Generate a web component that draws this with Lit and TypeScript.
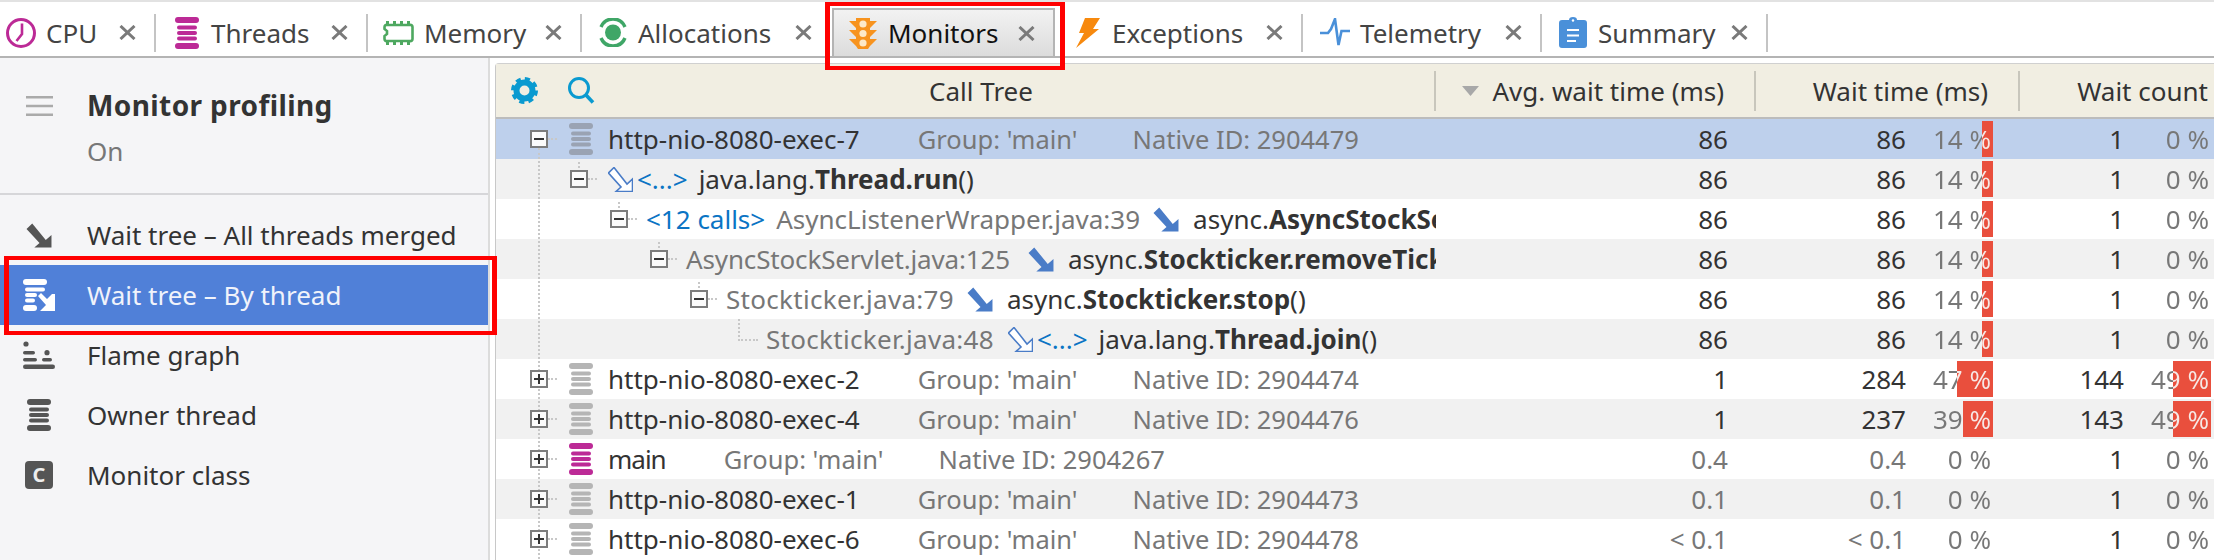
import { LitElement, html, css, svg } from 'lit';
import { customElement } from 'lit/decorators.js';

const threadBars = (color: string) => svg`
  <g fill=${color}>
    <rect x="0" y="0" width="24" height="6" rx="3" />
    <rect x="2" y="8.5" width="20" height="4" rx="2" />
    <rect x="2" y="14" width="20" height="4" rx="2" />
    <rect x="2" y="19.5" width="20" height="4" rx="2" />
    <rect x="0" y="26" width="24" height="6" rx="3" />
  </g>`;

const threadIcon = (color: string) =>
  html`<svg class="thread" width="24" height="32" viewBox="0 0 24 32">${threadBars(color)}</svg>`;

const ARROW = 'M0.5 6 L6 0.5 L19 17 L24.5 12 L24.5 24.5 L8 24.5 L13 20 Z';

const solidArrow = (color = '#4a7cc7') =>
  html`<svg class="arrow solid" width="26" height="25" viewBox="0 0 25 25" preserveAspectRatio="none"><path d=${ARROW} fill=${color} /></svg>`;

const outlineArrow = () =>
  html`<svg class="arrow" width="25" height="25" viewBox="0 0 25 25"><path d=${ARROW} fill="#fff" stroke="#4a7cc7" stroke-width="1.6" /></svg>`;

const closeIcon = html`<svg class="close" width="17" height="15" viewBox="0 0 17 15"><path d="M1.5 1 L15.5 14 M15.5 1 L1.5 14" stroke="#7a7a7a" stroke-width="3" fill="none" /></svg>`;

const tabIcons = [
  html`<svg width="32" height="32" viewBox="0 0 32 32"><circle cx="16" cy="16" r="13.5" fill="#fff" stroke="#bc2a96" stroke-width="3" /><path d="M17 6.5 L17 17 L11.5 24" fill="none" stroke="#bc2a96" stroke-width="2.6" /></svg>`,
  html`<svg width="24" height="32" viewBox="0 0 24 32">${threadBars('#bc2a96')}</svg>`,
  html`<svg width="31" height="24" viewBox="0 0 31 24"><path d="M4 4 H27 A2 2 0 0 1 29.5 6 V18 A2 2 0 0 1 27 20 H4 A2 2 0 0 1 1.5 18 V15 L4 13 V10 L1.5 8 V6 A2 2 0 0 1 4 4 Z" fill="none" stroke="#4ea860" stroke-width="2.6" /><path d="M3 0 h3 v3 h-3z M10 0 h3 v3 h-3z M17 0 h3 v3 h-3z M24 0 h3 v3 h-3z M3 21 h3 v3 h-3z M10 21 h3 v3 h-3z M17 21 h3 v3 h-3z M24 21 h3 v3 h-3z" fill="#4ea860" /></svg>`,
  html`<svg width="30" height="29" viewBox="0 0 30 29"><circle cx="15" cy="14.5" r="8" fill="#3fa667" /><path d="M3 9 A13 13 0 0 1 27 9 M27 20 A13 13 0 0 1 3 20" fill="none" stroke="#3fa667" stroke-width="3.4" /></svg>`,
  html`<svg width="28" height="31" viewBox="0 0 28 31"><path d="M7 0 H21 V3 H28 L21 10 V12 H28 L21 19 V21 H28 L21 28 L19 31 H9 L7 28 L0 21 H7 V19 L0 12 H7 V10 L0 3 H7 Z" fill="#f7931e" /><circle cx="14" cy="6" r="3.6" fill="#fde9c8" /><circle cx="14" cy="15.5" r="3.6" fill="#fde9c8" /><circle cx="14" cy="25" r="3.6" fill="#fde9c8" /></svg>`,
  html`<svg width="24" height="30" viewBox="0 0 24 30"><path d="M9 0 H24 L17 11 H23 L0 30 L8 15 H3 Z" fill="#f7890e" /></svg>`,
  html`<svg width="30" height="29" viewBox="0 0 30 29"><path d="M0 15 H8 L11 11 L15 1 L18.5 27 L21.5 13 H30" fill="none" stroke="#4a90d9" stroke-width="2.6" /></svg>`,
  html`<svg width="28" height="31" viewBox="0 0 28 31"><path d="M3 3 H10 A4 3 0 0 1 18 3 H25 A3 3 0 0 1 28 6 V28 A3 3 0 0 1 25 31 H3 A3 3 0 0 1 0 28 V6 A3 3 0 0 1 3 3 Z" fill="#4a90d9" /><path d="M8 13 H20 M8 18.5 H20 M8 24 H17" stroke="#fff" stroke-width="2" /><circle cx="14" cy="3.5" r="1.2" fill="#fff" /></svg>`,
];

const tabs = ['CPU', 'Threads', 'Memory', 'Allocations', 'Monitors', 'Exceptions', 'Telemetry', 'Summary'];

interface TreeRow {
  level: number;
  expand: '-' | '+' | '';
  kind?: 'gray' | 'pink' | 'sel';
  parts: unknown;
  avg: string;
  time: string;
  timePct: number;
  count: string;
  countPct: number;
  faint?: boolean;
  selected?: boolean;
}

const threadText = (name: string, id: string) => html`
  <span class="name ${name === 'main' ? 'short' : ''}">${name}</span>
  <span class="meta first">Group: 'main'</span>
  <span class="meta next">Native ID: ${id}</span>`;

const rows: TreeRow[] = [
  { level: 0, expand: '-', kind: 'sel', selected: true, parts: threadText('http-nio-8080-exec-7', '2904479'), avg: '86', time: '86', timePct: 14, count: '1', countPct: 0 },
  { level: 1, expand: '-', parts: html`<span class="nudge">${outlineArrow()}</span><span class="link tight">&lt;...&gt;</span><span class="call">java.lang.<b>Thread.run</b>()</span>`, avg: '86', time: '86', timePct: 14, count: '1', countPct: 0 },
  { level: 2, expand: '-', parts: html`<span class="link">&lt;12 calls&gt;</span><span class="src wrap">AsyncListenerWrapper.java:39</span>${solidArrow()}<span class="call">async.<b>AsyncStockServlet.doGet</b>()</span>`, avg: '86', time: '86', timePct: 14, count: '1', countPct: 0 },
  { level: 3, expand: '-', parts: html`<span class="src narrow">AsyncStockServlet.java:125</span>${solidArrow()}<span class="call">async.<b>Stockticker.removeTicker</b>()</span>`, avg: '86', time: '86', timePct: 14, count: '1', countPct: 0 },
  { level: 4, expand: '-', parts: html`<span class="src wide">Stockticker.java:79</span>${solidArrow()}<span class="call">async.<b>Stockticker.stop</b>()</span>`, avg: '86', time: '86', timePct: 14, count: '1', countPct: 0 },
  { level: 5, expand: '', parts: html`<span class="src wide">Stockticker.java:48</span>${outlineArrow()}<span class="link tight">&lt;...&gt;</span><span class="call">java.lang.<b>Thread.join</b>()</span>`, avg: '86', time: '86', timePct: 14, count: '1', countPct: 0 },
  { level: 0, expand: '+', kind: 'gray', parts: threadText('http-nio-8080-exec-2', '2904474'), avg: '1', time: '284', timePct: 47, count: '144', countPct: 49 },
  { level: 0, expand: '+', kind: 'gray', parts: threadText('http-nio-8080-exec-4', '2904476'), avg: '1', time: '237', timePct: 39, count: '143', countPct: 49 },
  { level: 0, expand: '+', kind: 'pink', faint: true, parts: threadText('main', '2904267'), avg: '0.4', time: '0.4', timePct: 0, count: '1', countPct: 0 },
  { level: 0, expand: '+', kind: 'gray', faint: true, parts: threadText('http-nio-8080-exec-1', '2904473'), avg: '0.1', time: '0.1', timePct: 0, count: '1', countPct: 0 },
  { level: 0, expand: '+', kind: 'gray', faint: true, parts: threadText('http-nio-8080-exec-6', '2904478'), avg: '< 0.1', time: '< 0.1', timePct: 0, count: '1', countPct: 0 },
];

const threadColor = { gray: '#b5b5b5', pink: '#bc2a96', sel: '#9aa3b3' };

// px of bar per percent point
const BAR_SCALE = 0.77;

@customElement('app-root')
export class AppRoot extends LitElement {
  static styles = css`
    :host {
      display: block;
      width: 2214px;
      height: 560px;
      overflow: hidden;
      background: #fff;
      font-family: 'Noto Sans', sans-serif;
      font-size: 26px;
      color: #333;
    }
    .tabbar {
      display: grid;
      grid-template-columns: 156px 212px 214px 250px 223px 248px 239px 226px;
      height: 54px;
      border-top: 2px solid #e2e2e2;
      border-bottom: 2px solid #b4b4b4;
      box-sizing: content-box;
    }
    .tab {
      position: relative;
      display: flex;
      align-items: center;
      gap: 11px;
      padding: 7px 0 0 17px;
      color: #444;
    }
    .tab:nth-child(1) { padding-left: 5px; gap: 9px; }
    .tab:nth-child(2) { padding-left: 19px; gap: 12px; }
    .tab:nth-child(3) { padding-left: 15px; gap: 10px; }
    .tab:nth-child(4) { padding-left: 16px; gap: 10px; }
    .tab:nth-child(5) { padding-left: 17px; gap: 11px; }
    .tab:nth-child(6) { padding-left: 21px; gap: 12px; }
    .tab:nth-child(7) { gap: 10px; }
    .tab.active {
      box-sizing: border-box;
      margin-top: 6px;
      padding-top: 0;
      padding-left: 15px;
      color: #111;
      background: linear-gradient(#f2f2f2, #dcdcdc);
      border: 2px solid #b4b4b4;
      border-bottom: none;
    }
    .tab.active .close { margin-right: 18px; }
    .tab svg { flex: none; }
    .close { margin-left: auto; margin-right: 20px; }
    .tab .sep {
      width: 2px;
      height: 38px;
      background: #c4c4c4;
      position: absolute;
      right: 0;
      top: 12px;
    }
    .tab.nosep .sep, .tab.active .sep { display: none; }
    .marker {
      position: absolute;
      border: 4px solid #f00;
      pointer-events: none;
      z-index: 5;
    }
    .tab .marker { left: -9px; right: -12px; top: -8px; bottom: -14px; border-width: 4px 5px; }

    .main {
      display: grid;
      grid-template-columns: 490px 5px 1719px;
      height: 502px;
    }
    .side {
      position: relative;
      background: #f5f5f7;
      border-right: 2px solid #dcdcdc;
      box-sizing: content-box;
      width: 488px;
    }
    .side-head {
      display: grid;
      grid-template-columns: 87px 1fr;
      height: 137px;
      box-sizing: border-box;
      padding-top: 29px;
      border-bottom: 2px solid #d6d6d9;
    }
    .burger { margin: 9px 0 0 26px; }
    .title { font-size: 28px; letter-spacing: 0.4px; font-weight: 700; color: #333; line-height: 36px; }
    .state { color: #777; margin-top: 11px; line-height: 34px; }
    .side-list { padding-top: 10px; }
    .side-item {
      position: relative;
      display: flex;
      align-items: center;
      height: 60px;
    }
    .side-item .ico {
      display: flex;
      justify-content: center;
      width: 78px;
      flex: none;
    }
    .side-item .arrow.solid { margin-left: 0; }
    .side-item .txt { margin-left: 9px; }
    .side-item.sel { background: #5080d8; color: #f0f3fb; }
    .side-item .marker { left: 4px; right: -9px; top: -9px; bottom: -10px; border-width: 4px 5px; }
    .cbox {
      width: 28px;
      height: 28px;
      border-radius: 4px;
      background: #555;
      color: #eee;
      font-size: 20px;
      font-weight: 700;
      line-height: 28px;
      text-align: center;
    }

    .table {
      position: relative;
      margin-top: 5px;
      border-left: 1px solid #c8c8c8;
      border-top: 1px solid #d0d0d0;
      border-top-left-radius: 4px;
      min-width: 0;
    }
    .cols {
      display: grid;
      grid-template-columns: 940px 320px 264px 194px;
    }
    .head {
      height: 53px;
      background: #f1eee2;
      border-bottom: 2px solid #bcbcbc;
    }
    .hcell {
      display: flex;
      align-items: center;
      justify-content: flex-end;
      position: relative;
      padding-right: 32px;
    }
    .hcell:last-child { padding-right: 6px; }
    .hcell.tree { justify-content: center; padding: 0 0 0 30px; }
    .hcell .tools {
      position: absolute;
      left: 15px;
      top: 13px;
      display: flex;
      gap: 29px;
    }
    .hcell .divider {
      position: absolute;
      right: 0;
      top: 7px;
      width: 2px;
      height: 40px;
      background: #c8c6bc;
    }
    .sort { margin-right: 13px; }
    .body { position: relative; }
    .vline {
      position: absolute;
      left: 42px;
      top: 29px;
      bottom: 0;
      border-left: 2px dotted #c8c8c8;
    }
    .row { height: 40px; line-height: 40px; background: #fff; white-space: nowrap; }
    .row:nth-child(even) { background: #f1f1f1; }
    .row.selected { background: #bed0ec; }
    .tree-cell {
      display: flex;
      align-items: center;
      min-width: 0;
      overflow: hidden;
    }
    .expander {
      position: relative;
      z-index: 1;
      flex: none;
      box-sizing: border-box;
      width: 18px;
      height: 18px;
      margin-right: 18px;
      border: 2px solid #7c7c7c;
      background: #fbfbfb;
    }
    .expander::before {
      content: '';
      position: absolute;
      left: 2px;
      right: 2px;
      top: 6px;
      height: 2px;
      background: #333;
    }
    .expander.plus::after {
      content: '';
      position: absolute;
      left: 6px;
      top: 2px;
      bottom: 2px;
      width: 2px;
      background: #333;
    }
    .stub {
      position: absolute;
      left: 6px;
      top: -15px;
      height: 11px;
      border-left: 2px dotted #c8c8c8;
    }
    .dash {
      position: absolute;
      left: 16px;
      top: 6px;
      width: 9px;
      border-top: 2px dotted #c8c8c8;
    }
    .elbow {
      position: relative;
      flex: none;
      width: 18px;
      height: 40px;
      margin-right: 18px;
    }
    .elbow::before {
      content: '';
      position: absolute;
      left: 8px;
      top: 0;
      width: 18px;
      height: 20px;
      border-left: 2px dotted #c8c8c8;
      border-bottom: 2px dotted #c8c8c8;
    }
    .thread { flex: none; margin: 0 15px 0 3px; }
    .name { color: #333; }
    .name.short { letter-spacing: -1px; }
    .meta { color: #777; font-size: 25.5px; }
    .meta.first { margin-left: 58px; }
    .meta.next { margin-left: 55px; }
    .link { color: #0a74c4; }
    .link.tight { margin-left: 4px; }
    .src { color: #777; }
    .src.wrap { margin-left: 11px; }
    .src.wide { letter-spacing: 0.3px; }
    .src.narrow { letter-spacing: -0.15px; }
    .arrow { flex: none; margin-left: 14px; }
    .arrow.solid { margin-left: 13px; }
    .src.narrow + .arrow.solid { margin-left: 18px; }
    .nudge { display: flex; margin-left: 2px; }
    .nudge .arrow { margin-left: 0; }
    .call { margin-left: 11px; color: #333; white-space: pre; }
    .arrow.solid + .call { margin-left: 14px; }
    .call b { font-weight: 700; }
    .num {
      display: flex;
      align-items: center;
      justify-content: flex-end;
      min-width: 0;
      padding-right: 28px;
    }
    .num.faint .val { color: #777; }
    .num.with-pct { padding-right: 27px; gap: 11px; }
    .num.count { padding-right: 3px; }
    .num.count.faint .val { color: #333; }
    .pct {
      width: 76px;
      height: 36px;
      line-height: 36px;
      background: linear-gradient(to left, #e94f3d var(--bar), transparent var(--bar));
    }
    .pct span {
      display: block;
      box-sizing: border-box;
      padding-right: 2px;
      text-align: right;
      color: transparent;
      background: linear-gradient(to left, #f6e9e6 var(--bar), #777 var(--bar));
      -webkit-background-clip: text;
      background-clip: text;
    }
  `;

  private renderBar(pct: number) {
    return html`<div class="pct" style="--bar:${Math.round(pct * BAR_SCALE)}px"><span>${pct} %</span></div>`;
  }

  private renderRow(r: TreeRow) {
    const indent = 34 + r.level * 40;
    return html`
      <div class="row cols ${r.selected ? 'selected' : ''}">
        <div class="tree-cell" style="padding-left:${indent}px">
          ${r.expand
            ? html`<span class="expander ${r.expand === '+' ? 'plus' : ''}">
                ${r.level > 0 ? html`<i class="stub"></i>` : ''}<i class="dash"></i>
              </span>`
            : html`<span class="elbow"></span>`}
          ${r.kind ? threadIcon(threadColor[r.kind]) : ''}
          ${r.parts}
        </div>
        <div class="num ${r.faint ? 'faint' : ''}"><span class="val">${r.avg}</span></div>
        <div class="num with-pct ${r.faint ? 'faint' : ''}"><span class="val">${r.time}</span>${this.renderBar(r.timePct)}</div>
        <div class="num with-pct count ${r.faint ? 'faint' : ''}"><span class="val">${r.count}</span>${this.renderBar(r.countPct)}</div>
      </div>`;
  }

  render() {
    return html`
      <div class="tabbar">
        ${tabs.map(
          (t, i) => html`
            <div class="tab ${t === 'Monitors' ? 'active' : ''} ${t === 'Allocations' ? 'nosep' : ''}">
              ${tabIcons[i]}<span>${t}</span>${closeIcon}<i class="sep"></i>
              ${t === 'Monitors' ? html`<i class="marker"></i>` : ''}
            </div>`
        )}
      </div>
      <div class="main">
        <div class="side">
          <div class="side-head">
            <svg class="burger" width="27" height="20" viewBox="0 0 27 20"><path d="M0 1.2 H27 M0 10 H27 M0 18.8 H27" stroke="#aaa" stroke-width="2.4" /></svg>
            <div>
              <div class="title">Monitor profiling</div>
              <div class="state">On</div>
            </div>
          </div>
          <div class="side-list">
            <div class="side-item">
              <span class="ico">${solidArrow('#555')}</span><span class="txt">Wait tree – All threads merged</span>
            </div>
            <div class="side-item sel">
              <span class="ico">
                <svg width="32" height="32" viewBox="0 0 32 32">
                  <g fill="#fff">
                    <rect x="0" y="0" width="24" height="6" rx="3" />
                    <rect x="2" y="8.5" width="20" height="4" rx="2" />
                    <rect x="2" y="14" width="12" height="4" rx="2" />
                    <rect x="2" y="19.5" width="10" height="4" rx="2" />
                    <rect x="0" y="26" width="14" height="6" rx="3" />
                    <path d="M15 17 L18 14 L24 20 L29 15 L32 15 V32 H17 L22 27 L23 26 Z" />
                  </g>
                </svg>
              </span><span class="txt">Wait tree – By thread</span>
              <i class="marker"></i>
            </div>
            <div class="side-item">
              <span class="ico">
                <svg width="32" height="28" viewBox="0 0 32 28">
                  <g fill="#555">
                    <circle cx="3" cy="3" r="2.6" />
                    <rect x="0" y="10" width="12" height="3.5" rx="1.7" />
                    <circle cx="24" cy="11.7" r="2.6" />
                    <rect x="0" y="17" width="14" height="3.5" rx="1.7" />
                    <rect x="19" y="17" width="10" height="3.5" rx="1.7" />
                    <rect x="0" y="23.5" width="32" height="4.5" rx="2.2" />
                  </g>
                </svg>
              </span><span class="txt">Flame graph</span>
            </div>
            <div class="side-item">
              <span class="ico"><svg width="24" height="32" viewBox="0 0 24 32">${threadBars('#555')}</svg></span>
              <span class="txt">Owner thread</span>
            </div>
            <div class="side-item">
              <span class="ico"><span class="cbox">C</span></span><span class="txt">Monitor class</span>
            </div>
          </div>
        </div>
        <div></div>
        <div class="table">
          <div class="cols head">
            <div class="hcell tree">
              <span class="tools">
                <svg width="27" height="27" viewBox="0 0 27 27">
                  <circle cx="13.5" cy="13.5" r="8" fill="none" stroke="#0a9ad0" stroke-width="6" />
                  <circle cx="13.5" cy="13.5" r="11.5" fill="none" stroke="#0a9ad0" stroke-width="4" stroke-dasharray="5 4.03" />
                </svg>
                <svg width="28" height="27" viewBox="0 0 28 27">
                  <circle cx="12" cy="11" r="9.5" fill="none" stroke="#0a9ad0" stroke-width="3" />
                  <path d="M19 18 L26 25.5" stroke="#0a9ad0" stroke-width="3.6" />
                </svg>
              </span>
              Call Tree<i class="divider"></i>
            </div>
            <div class="hcell">
              <svg class="sort" width="17" height="10" viewBox="0 0 17 10"><path d="M0 0 H17 L8.5 10 Z" fill="#a8a8a8" /></svg>
              Avg. wait time (ms)<i class="divider"></i>
            </div>
            <div class="hcell">Wait time (ms)<i class="divider"></i></div>
            <div class="hcell">Wait count</div>
          </div>
          <div class="body">
            ${rows.map((r) => this.renderRow(r))}
            <i class="vline"></i>
          </div>
        </div>
      </div>
    `;
  }
}
